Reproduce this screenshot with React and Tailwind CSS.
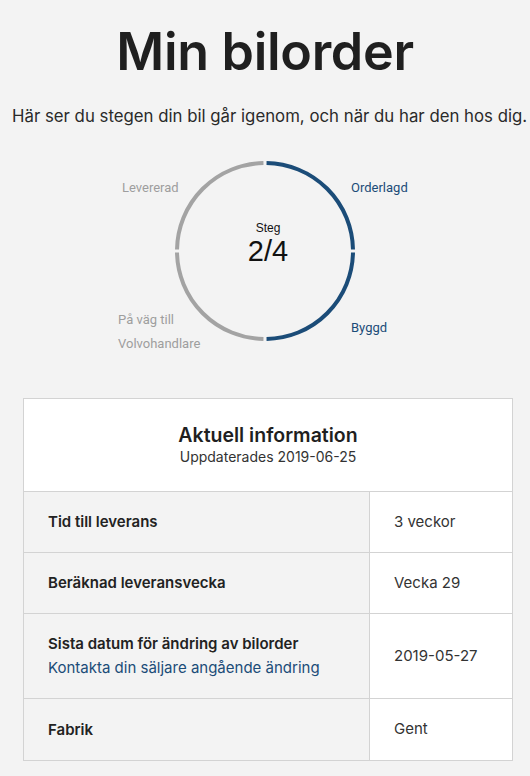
import React from "react";

const BLUE = "#1b4c78";
const GRAY = "#a3a3a3";

// four quarter arcs with small gaps at 12, 3, 6 and 9 o'clock
const arcs = [
  { d: "M91.54 2.01 A88 88 0 0 1 177.99 88.46", color: BLUE },
  { d: "M177.99 91.54 A88 88 0 0 1 91.54 177.99", color: BLUE },
  { d: "M88.46 177.99 A88 88 0 0 1 2.01 91.54", color: GRAY },
  { d: "M2.01 88.46 A88 88 0 0 1 88.46 2.01", color: GRAY },
];

const rows = [
  { label: "Tid till leverans", value: "3 veckor" },
  { label: "Beräknad leveransvecka", value: "Vecka 29" },
  {
    label: "Sista datum för ändring av bilorder",
    note: "Kontakta din säljare angående ändring",
    value: "2019-05-27",
  },
  { label: "Fabrik", value: "Gent" },
];

const StepCircle = () => (
  <div className="relative mx-auto h-[184px] w-[530px] font-['Roboto',sans-serif] text-[13px]">
    <span className="absolute left-[122px] top-[19px] text-[#9e9e9e]">Levererad</span>
    <span className="absolute left-[351px] top-[19px] text-[#1b4c78]">Orderlagd</span>
    <span className="absolute left-[351px] top-[159px] text-[#1b4c78]">Byggd</span>
    <div className="absolute left-[118px] top-[149px] leading-[24px] text-[#9e9e9e]">
      <div>På väg till</div>
      <div>Volvohandlare</div>
    </div>
    <div className="absolute left-[173px] top-0 h-[184px] w-[184px]">
      <svg width="184" height="184" viewBox="-2 -2 184 184" fill="none">
        {arcs.map((a, i) => (
          <path key={i} d={a.d} stroke={a.color} strokeWidth="4" />
        ))}
      </svg>
      <div className="absolute inset-0 flex flex-col items-center pl-[6px] pt-[63px] font-['Liberation_Sans',sans-serif] text-[#111]">
        <span className="text-[12px] leading-[12px]">Steg</span>
        <span className="text-[29px] leading-[34px]">2/4</span>
      </div>
    </div>
  </div>
);

export default function App() {
  return (
    <div className="min-h-[776px] w-[530px] overflow-hidden bg-[#f3f3f3] font-['Inter',sans-serif] text-[#222]">
      <h1 className="pt-[20px] text-center text-[52px] font-semibold leading-[64px] tracking-[-0.3px] text-[#1f1f1f]">
        Min bilorder
      </h1>
      <p className="mt-[20px] whitespace-nowrap pl-[12px] text-[16.8px] leading-[24px] text-[#2a2a2a]">
        Här ser du stegen din bil går igenom, och när du har den hos dig.
      </p>
      <div className="mt-[31px]">
        <StepCircle />
      </div>

      <div className="ml-[23px] mt-[55px] w-[490px] border border-[#d3d3d3] bg-white">
        <div className="flex h-[93px] flex-col items-center justify-center border-b border-[#d3d3d3]">
          <div className="text-[19.5px] font-semibold leading-[24px] text-[#1f1f1f]">
            Aktuell information
          </div>
          <div className="text-[14px] leading-[20px] text-[#333]">
            Uppdaterades 2019-06-25
          </div>
        </div>
        {rows.map((r, i) => (
          <div
            key={r.label}
            className={`grid grid-cols-[346px_1fr] ${i < rows.length - 1 ? "border-b border-[#d3d3d3]" : ""} ${r.note ? "h-[85px]" : "h-[61px]"}`}
          >
            <div className="flex flex-col justify-center border-r border-[#d3d3d3] bg-[#f3f3f3] pl-[24px]">
              <div className="text-[15px] font-semibold leading-[24px] text-[#222]">{r.label}</div>
              {r.note && (
                <div className="text-[15px] leading-[24px] text-[#1b4c78]">{r.note}</div>
              )}
            </div>
            <div className="flex items-center pl-[24px] text-[15px] text-[#333]">{r.value}</div>
          </div>
        ))}
      </div>
    </div>
  );
}
